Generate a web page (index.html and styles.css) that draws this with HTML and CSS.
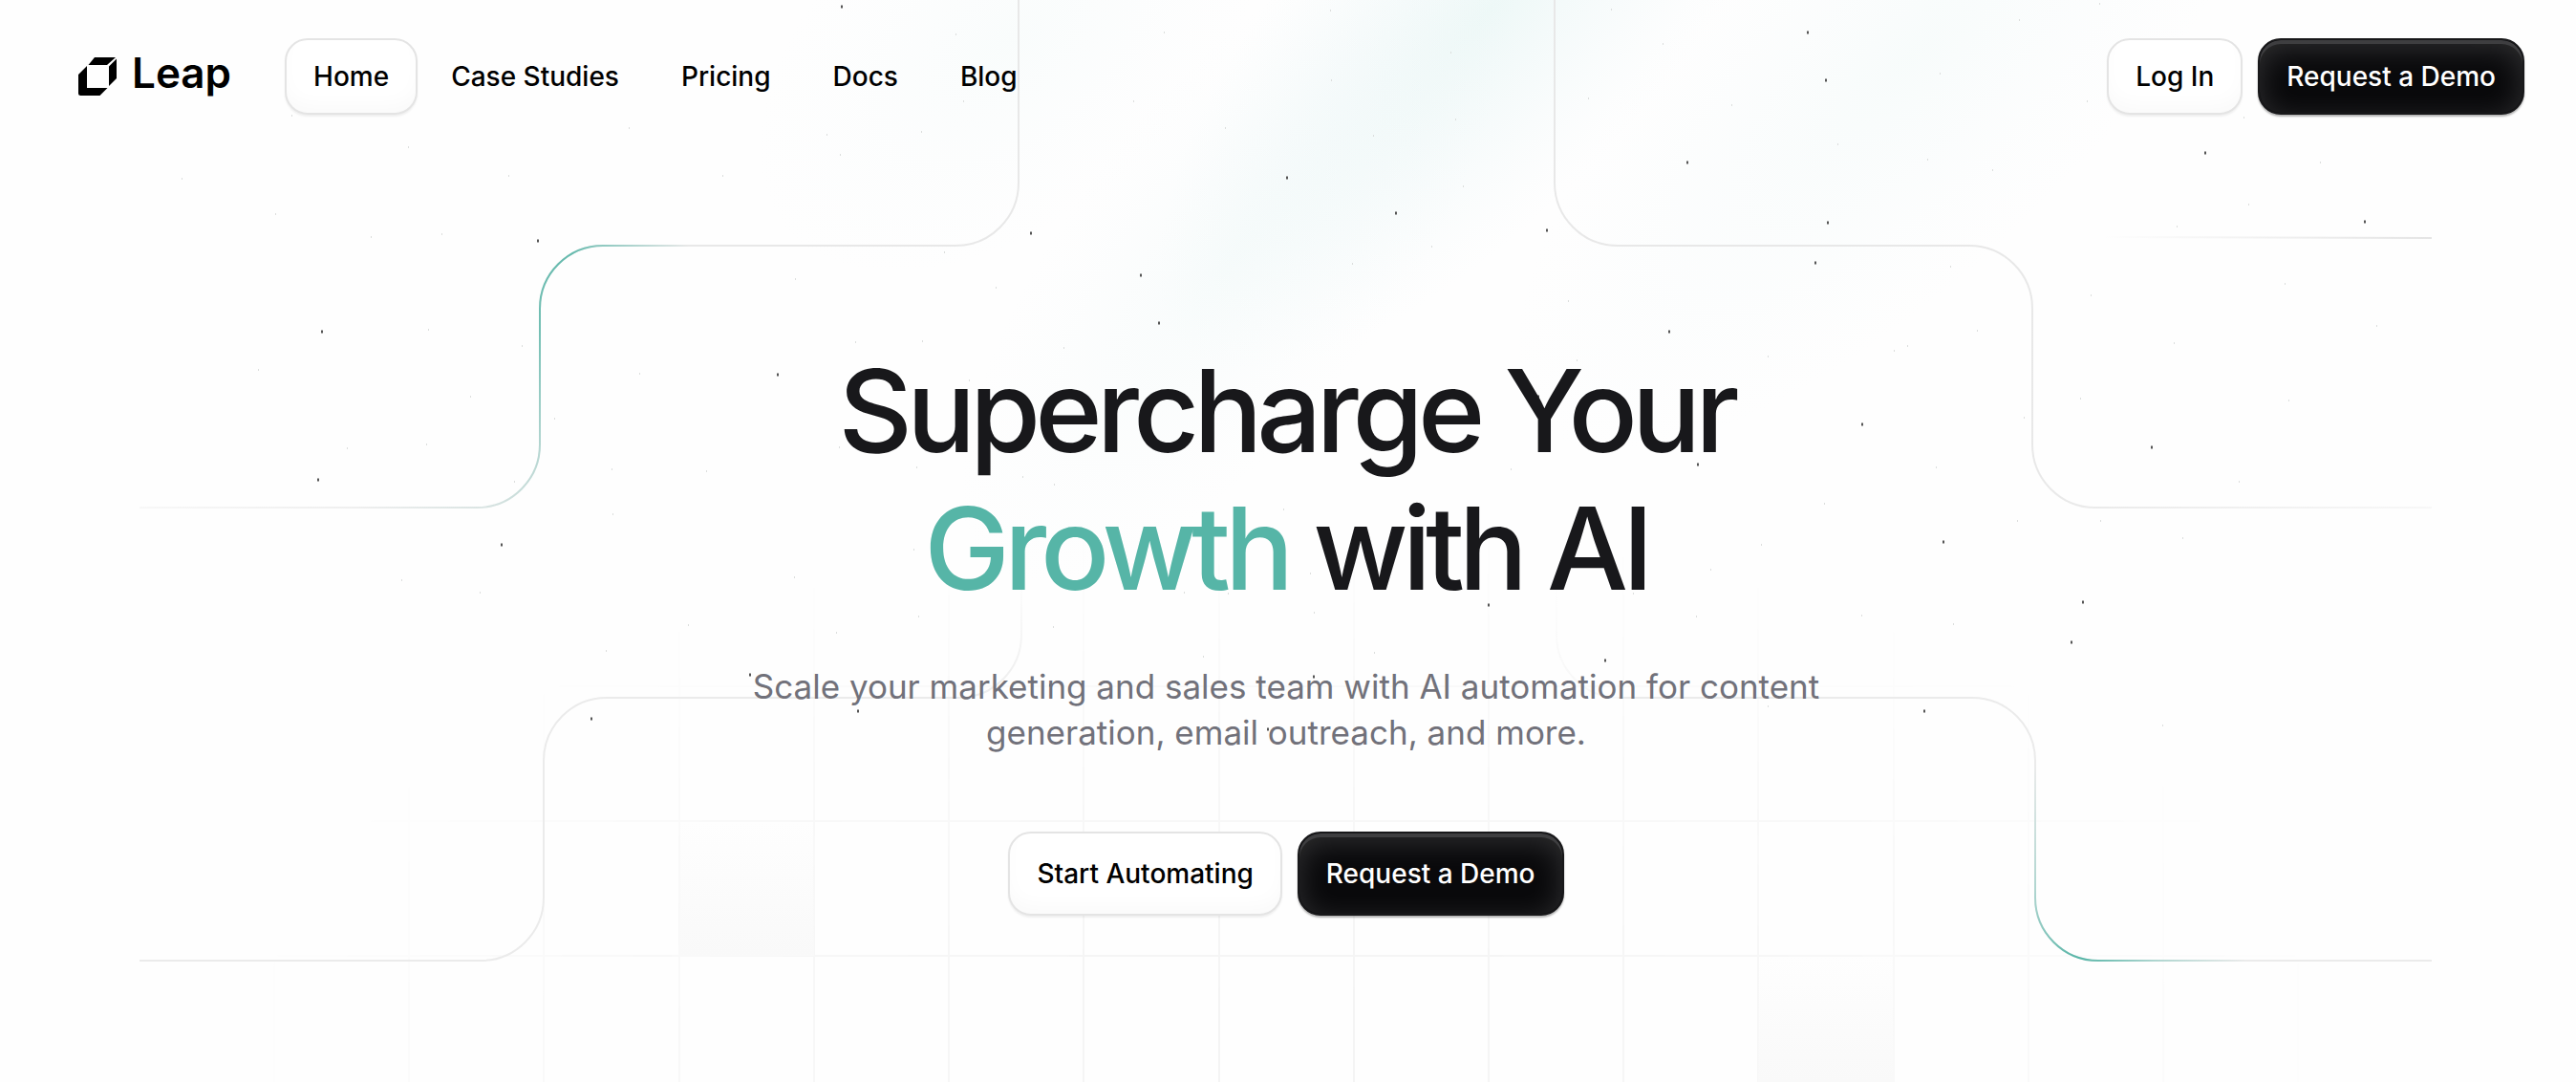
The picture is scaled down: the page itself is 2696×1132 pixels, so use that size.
FILE: index.html
```html
<!DOCTYPE html>
<html lang="en">
<head>
<meta charset="utf-8">
<meta name="viewport" content="width=device-width, initial-scale=1">
<title>Leap</title>
<link rel="stylesheet" href="styles.css">
</head>
<body>
<div class="page">
  <svg class="backdrop" viewBox="0 0 2696 1132" preserveAspectRatio="xMidYMin slice" aria-hidden="true">
    <defs>
      <radialGradient id="beam">
        <stop offset="0" stop-color="#9fdcd5" stop-opacity=".17"/>
        <stop offset=".5" stop-color="#b4dfe2" stop-opacity=".09"/>
        <stop offset="1" stop-color="#c8e6ea" stop-opacity="0"/>
      </radialGradient>
      <radialGradient id="gridFade" gradientUnits="userSpaceOnUse" cx="0" cy="0" r="1" gradientTransform="translate(1346 1132) scale(1120 600)">
        <stop offset="0" stop-color="#fff"/>
        <stop offset=".5" stop-color="#fff" stop-opacity=".65"/>
        <stop offset="1" stop-color="#fff" stop-opacity="0"/>
      </radialGradient>
      <mask id="gridMask" maskUnits="userSpaceOnUse" x="0" y="0" width="2696" height="1132">
        <rect width="2696" height="1132" fill="url(#gridFade)"/>
      </mask>
      <linearGradient id="cell" x1="0" y1="0" x2="0" y2="1">
        <stop offset="0" stop-color="#f9f9f9" stop-opacity="0"/>
        <stop offset="1" stop-color="#f9f9f9"/>
      </linearGradient>
      <linearGradient id="fadeLeft" gradientUnits="userSpaceOnUse" x1="146" y1="0" x2="560" y2="0">
        <stop offset="0" stop-color="#e8e8e8" stop-opacity=".3"/>
        <stop offset="1" stop-color="#e8e8e8"/>
      </linearGradient>
      <linearGradient id="fadeRight" gradientUnits="userSpaceOnUse" x1="2120" y1="0" x2="2545" y2="0">
        <stop offset="0" stop-color="#e8e8e8"/>
        <stop offset="1" stop-color="#e8e8e8" stop-opacity=".3"/>
      </linearGradient>
      <linearGradient id="fadeIn" gradientUnits="userSpaceOnUse" x1="2200" y1="0" x2="2545" y2="0">
        <stop offset="0" stop-color="#e4e4e4" stop-opacity="0"/>
        <stop offset="1" stop-color="#e4e4e4"/>
      </linearGradient>
      <linearGradient id="fadeUp" gradientUnits="userSpaceOnUse" x1="0" y1="600" x2="0" y2="735">
        <stop offset="0" stop-color="#ececec" stop-opacity="0"/>
        <stop offset="1" stop-color="#ececec"/>
      </linearGradient>
      <linearGradient id="tealTop" gradientUnits="userSpaceOnUse" x1="720" y1="257" x2="473" y2="603">
        <stop offset="0" stop-color="#56b5a7" stop-opacity="0"/>
        <stop offset=".18" stop-color="#56b5a7" stop-opacity=".9"/>
        <stop offset=".38" stop-color="#56b5a7" stop-opacity=".8"/>
        <stop offset=".62" stop-color="#56b5a7" stop-opacity=".35"/>
        <stop offset=".83" stop-color="#56b5a7" stop-opacity=".1"/>
        <stop offset="1" stop-color="#56b5a7" stop-opacity="0"/>
      </linearGradient>
      <linearGradient id="tealBottom" gradientUnits="userSpaceOnUse" x1="2130" y1="800" x2="2350" y2="1005">
        <stop offset="0" stop-color="#56b5a7" stop-opacity="0"/>
        <stop offset=".3" stop-color="#56b5a7" stop-opacity=".4"/>
        <stop offset=".57" stop-color="#56b5a7"/>
        <stop offset=".77" stop-color="#56b5a7" stop-opacity=".4"/>
        <stop offset="1" stop-color="#56b5a7" stop-opacity="0"/>
      </linearGradient>
    </defs>

    <g fill="url(#beam)">
      <ellipse cx="1560" cy="10" rx="480" ry="190" transform="rotate(-48 1560 10)"/>
      <ellipse cx="1290" cy="270" rx="420" ry="170" transform="rotate(-52 1290 270)" opacity=".4"/>
      <ellipse cx="2000" cy="60" rx="560" ry="210" transform="rotate(-45 2000 60)" opacity=".4"/>
      <ellipse cx="1060" cy="40" rx="320" ry="190" transform="rotate(-40 1060 40)" opacity=".3"/>
    </g>

    <g mask="url(#gridMask)" stroke="#f3f3f3" stroke-width="2">
      <path d="M287 560V1132M428 560V1132M569 560V1132M711 560V1132M852 560V1132M993 560V1132M1134 560V1132M1276 560V1132M1417 560V1132M1558 560V1132M1699 560V1132M1840 560V1132M1982 560V1132M2123 560V1132M2264 560V1132M2405 560V1132"/>
      <path d="M200 718H2500M200 859H2500M200 1000H2500"/>
    </g>
    <rect x="711" y="859" width="141" height="141" fill="url(#cell)"/>
    <rect x="1840" y="1000" width="142" height="132" fill="url(#cell)"/>

    <g fill="none" stroke-width="2">
      <path stroke="url(#fadeLeft)" d="M1066 0V191A66 66 0 0 1 1000 257H631A66 66 0 0 0 565 323V465A66 66 0 0 1 499 531H146"/>
      <path stroke="url(#fadeRight)" d="M1627 0V191A66 66 0 0 0 1693 257H2061A66 66 0 0 1 2127 323V465A66 66 0 0 0 2193 531H2545"/>
      <path stroke="url(#fadeIn)" d="M2200 248L2545 249"/>
      <path stroke="#ebebeb" d="M1004 730H635A66 66 0 0 0 569 796V939A66 66 0 0 1 503 1005H146"/>
      <path stroke="#ebebeb" d="M1694 730H2064A66 66 0 0 1 2130 796V939A66 66 0 0 0 2196 1005H2545"/>
      <path stroke="url(#fadeUp)" d="M1069 600V664A66 66 0 0 1 1003 730"/>
      <path stroke="url(#fadeUp)" opacity=".4" d="M1629 600V664A66 66 0 0 0 1695 730"/>
      <path stroke="url(#tealTop)" d="M1000 257H631A66 66 0 0 0 565 323V465A66 66 0 0 1 499 531H146"/>
      <path stroke="url(#tealBottom)" d="M2130 796V939A66 66 0 0 0 2196 1005H2545"/>
    </g>

    <path class="star-faint" d="M305 121h1M427 154h1M190 187h1M288 224h1M388 248h1M462 245h1M532 184h1M658 134h1M756 184h1M865 141h1M832 292h1M448 345h1M546 362h1M270 387h1M492 415h1M580 438h1M669 391h1M363 469h1M446 465h1M538 504h1M640 491h1M739 493h1M641 538h1M420 607h1M502 620h1M831 604h1M720 654h1M878 468h1M1000 36h1M1218 34h1M1392 11h1M1518 55h1M1393 84h1M1186 106h1M1008 106h1M964 138h1M879 162h1M1282 134h1M1437 142h1M1523 125h1M1531 195h1M1498 258h1M1415 276h1M988 264h1M1042 301h1M965 357h1M895 358h1M1113 364h1M1686 10h1M2113 21h1M2197 4h1M1740 46h1M1662 103h1M1812 110h1M2030 77h1M2184 106h1M2348 123h1M1923 151h1M2017 167h1M2085 178h1M2428 170h1M2353 214h1M2278 237h1M2041 279h1M2391 297h1M2188 309h1M1641 315h1M2069 346h1M1996 362h1M1982 367h1M1850 373h1M1650 377h1M2487 341h1M2275 359h1M2177 417h1M2395 419h1M2118 437h1M2026 489h1M2343 504h1M1909 527h1M2111 545h1M2198 545h1M2284 563h1M1843 570h1M1581 491h1M1948 644h1M2044 653h1M1850 739h1M634 681h1M875 662h1M1259 687h1M1438 683h1M959 489h1M1070 499h1M1103 507h1M1014 398h1M956 575h1M1343 533h1M1371 600h1M1790 596h1M1239 620h1M1285 621h1M1375 641h1M961 645h1M1102 656h1M1709 621h1M1775 645h1M2263 759h1"/>
    <path class="star" d="M562 252h2M336 347h2M332 502h2M524 570h2M813 392h2M880 7h2M1078 244h2M1193 288h2M1212 338h2M1346 186h2M1460 223h2M1618 241h2M1891 34h2M1910 84h2M1765 170h2M1912 233h2M1899 275h2M1746 347h2M2307 160h2M2474 232h2M1948 444h2M2251 468h2M1776 486h2M2033 567h2M1609 415h2M2179 630h2M2167 672h2M2013 744h2M1557 633h2M784 706h2M897 744h2M1679 691h2M1374 708h2M1326 763h2M1098 717h2M618 752h2"/>
  </svg>

  <header class="header">
    <a class="logo" href="#">
      <svg class="logo-mark" viewBox="0 0 40 40" aria-hidden="true">
        <path d="M17 0H39L30 8H10.500ZM40 1.500V22L32 30V9.500ZM9 9V32H30.500L22.500 40H2.500Q0 40 0 37.500V18Z"/>
      </svg>
      <span>Leap</span>
    </a>
    <nav class="nav">
      <a class="btn btn-light" href="#">Home</a>
      <a class="btn btn-plain" href="#">Case Studies</a>
      <a class="btn btn-plain" href="#">Pricing</a>
      <a class="btn btn-plain" href="#">Docs</a>
      <a class="btn btn-plain" href="#">Blog</a>
    </nav>
    <div class="actions">
      <button class="btn btn-light" type="button">Log In</button>
      <button class="btn btn-dark" type="button">Request a Demo</button>
    </div>
  </header>

  <main class="hero">
    <h1 class="title">Supercharge Your<br><span class="accent">Growth</span> with AI</h1>
    <p class="lead">Scale your marketing and sales team with AI automation for content generation, email outreach, and more.</p>
    <div class="cta">
      <button class="btn btn-light btn-large" type="button">Start Automating</button>
      <button class="btn btn-dark btn-large" type="button">Request a Demo</button>
    </div>
  </main>
</div>
</body>
</html>
```
FILE: styles.css
```css
* { box-sizing: border-box; }

body {
  margin: 0;
  background: #fefefe;
  color: #18181b;
  font-family: Inter, sans-serif;
}

.page {
  position: relative;
  min-height: 100vh;
  overflow: hidden;
}

.backdrop {
  position: absolute;
  inset: 0;
  width: 100%;
  height: 100%;
}

.star, .star-faint { fill: none; stroke-width: 3; }
.star { stroke: #555; }
.star-faint { stroke: #dcdedd; stroke-width: 2; }

.header {
  position: relative;
  display: flex;
  align-items: center;
  padding: 40px 54px 0 82px;
}

.logo {
  display: flex;
  align-items: center;
  gap: 16px;
  margin-right: 56px;
  color: #000;
  font-size: 44px;
  font-weight: 600;
  line-height: 48px;
  text-decoration: none;
}
.logo span { margin-top: -8px; }
.logo-mark { width: 40px; height: 40px; }

.nav { display: flex; gap: 5px; }
.actions { display: flex; gap: 16px; margin-left: auto; }

.btn {
  display: block;
  padding: 20px 28px;
  border: 2px solid transparent;
  border-radius: 24px;
  background: none;
  color: #000;
  font-family: inherit;
  font-size: 28px;
  font-weight: 500;
  line-height: 36px;
  text-decoration: none;
  white-space: nowrap;
}
.btn-large { padding: 24px 28px; }

.btn-light {
  border-color: #e4e4e4;
  background: #fff;
  box-shadow: 0 2px 2px rgba(0, 0, 0, .06), inset 0 -12px 24px -8px rgba(0, 0, 0, .03);
}

.btn-dark {
  border-color: #18181a;
  background: #09090b;
  color: #fff;
  box-shadow: 0 2px 2px rgba(0, 0, 0, .3), inset 0 4px 0 #3e3e40, inset 0 8px 32px rgba(255, 255, 255, .16);
}

.hero {
  position: relative;
  display: flex;
  flex-direction: column;
  align-items: center;
  padding: 238px 36px 172px 32px;
  text-align: center;
}

.title {
  margin: 0;
  font-size: 120px;
  font-weight: 500;
  line-height: 144px;
  letter-spacing: -0.05em;
}
.accent { color: #56b5a7; }

.lead {
  max-width: 1152px;
  margin: 48px 0 80px;
  color: #71717a;
  font-size: 35px;
  line-height: 48px;
}

.cta { display: flex; gap: 16px; }
```
